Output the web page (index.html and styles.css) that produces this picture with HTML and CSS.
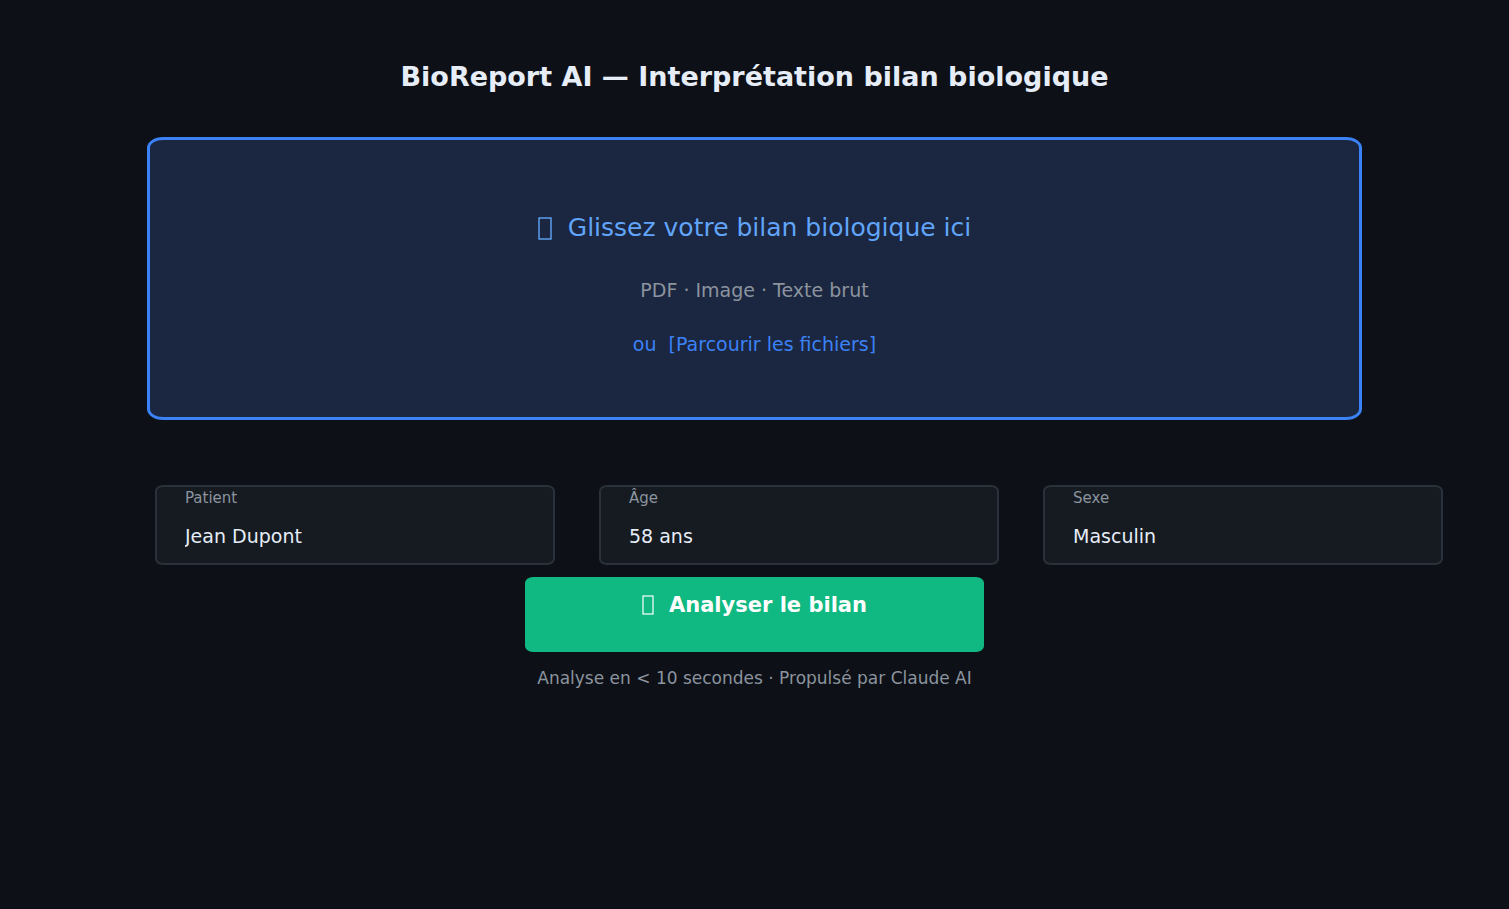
FILE: index.html
```html
<!DOCTYPE html>
<html lang="fr">
<head>
<meta charset="utf-8">
<title>BioReport AI</title>
<link rel="stylesheet" href="styles.css">
</head>
<body>
<main class="page">
  <h1 class="title">BioReport AI — Interprétation bilan biologique</h1>
  <section class="dropzone">
    <p class="drop-title"><svg class="drop-icon" viewBox="0 0 14 23" aria-hidden="true"><rect x="1" y="1" width="12" height="21"/></svg><span>Glissez votre bilan biologique ici</span></p>
    <p class="drop-formats">PDF · Image · Texte brut</p>
    <p class="drop-browse">ou&nbsp; <button type="button" class="browse">[Parcourir les fichiers]</button></p>
  </section>
  <form class="form">
    <div class="fields">
      <div class="field">
        <label class="label" for="patient">Patient</label>
        <input class="value" id="patient" type="text" value="Jean Dupont">
      </div>
      <div class="field">
        <label class="label" for="age">Âge</label>
        <input class="value" id="age" type="text" value="58 ans">
      </div>
      <div class="field">
        <label class="label" for="sexe">Sexe</label>
        <select class="value" id="sexe"><option>Masculin</option><option>Féminin</option></select>
      </div>
    </div>
    <button type="button" class="submit"><svg class="submit-icon" viewBox="0 0 12 20" aria-hidden="true"><rect x="1" y="1" width="10" height="18"/></svg><span>Analyser le bilan</span></button>
  </form>
  <p class="note">Analyse en &lt; 10 secondes · Propulsé par Claude AI</p>
</main>
</body>
</html>
```
FILE: styles.css
```css
* { box-sizing: border-box; }
body {
  margin: 0;
  background: #0d1017;
  color: #e6edf7;
  font-family: "DejaVu Sans", sans-serif;
}
h1, p { margin: 0; }
button, input, select { font: inherit; color: inherit; }
.page {
  display: flex;
  flex-direction: column;
  padding: 61px 66px 60px 147px;
}
.title {
  margin-right: 81px;
  text-align: center;
  font-size: 27px;
  line-height: 32px;
  font-weight: 700;
}
.dropzone {
  display: flex;
  flex-direction: column;
  align-items: center;
  margin: 44px 81px 0 0;
  padding: 72px 24px 61px;
  border: 3px solid #3b82f6;
  border-radius: 16px / 11px;
  background: #1b2640;
}
.drop-title {
  display: flex;
  align-items: center;
  gap: 16px;
  color: #60a5fa;
  font-size: 25px;
  line-height: 32px;
}
.drop-icon {
  width: 14px;
  height: 23px;
  fill: none;
  stroke: currentColor;
  stroke-width: 1.4;
}
.drop-formats {
  margin-top: 34px;
  color: #8b949e;
  font-size: 19px;
  line-height: 24px;
}
.drop-browse {
  margin-top: 30px;
  color: #3b82f6;
  font-size: 19px;
  line-height: 24px;
}
.browse {
  padding: 0;
  border: 0;
  background: none;
  cursor: pointer;
}
.form {
  display: flex;
  flex-direction: column;
  margin: 65px 0 0 8px;
}
.fields {
  display: grid;
  grid-template-columns: repeat(3, 1fr);
  gap: 44px;
}
.field {
  display: flex;
  flex-direction: column;
  gap: 16px;
  padding: 1px 24px 15px;
  border: 2px solid #2b313a;
  border-radius: 8px / 6px;
  background: #161b22;
}
.label {
  padding: 0 4px;
  color: #8b949e;
  font-size: 15px;
  line-height: 20px;
}
.value {
  width: 100%;
  height: 24px;
  padding: 0 4px;
  border: 0;
  background: none;
  appearance: none;
  font-size: 19px;
  line-height: 24px;
}
.submit {
  display: flex;
  align-items: center;
  justify-content: center;
  gap: 15px;
  width: 459px;
  margin: 12px 89px 0 0;
  padding: 16px 16px 35px;
  align-self: center;
  border: 0;
  border-radius: 8px / 6px;
  background: #10b981;
  color: #ffffff;
  font-size: 21px;
  line-height: 24px;
  font-weight: 700;
  cursor: pointer;
}
.submit-icon {
  width: 12px;
  height: 20px;
  fill: none;
  stroke: currentColor;
  stroke-width: 1.2;
}
.note {
  margin: 16px 81px 0 0;
  text-align: center;
  color: #8b949e;
  font-size: 17px;
  line-height: 20px;
}
```
